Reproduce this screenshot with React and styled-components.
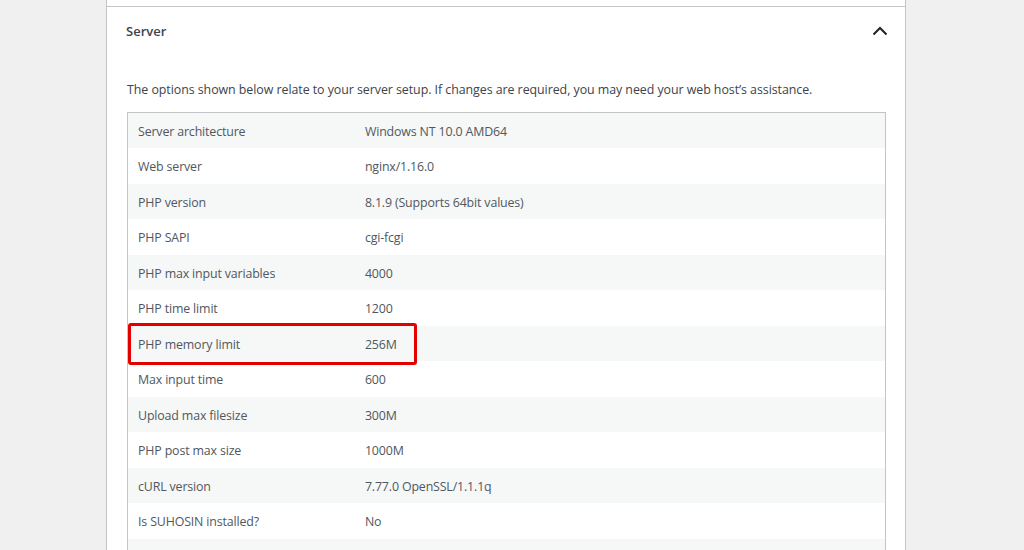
import React from "react";
import styled, { createGlobalStyle } from "styled-components";

const Global = createGlobalStyle`
  html, body { margin: 0; padding: 0; background: #f0f0f1; }
  body { font-family: "Open Sans", "Liberation Sans", sans-serif; height: 550px; overflow: hidden; }
`;

const Page = styled.div`
  padding-left: 106px;
`;

const Panel = styled.div`
  width: 798px;
  background: #fff;
  border-left: 1px solid #c3c4c7;
  border-right: 1px solid #c3c4c7;
  padding-top: 6px;
  min-height: 600px;
`;

const Section = styled.section`
  border-top: 1px solid #c3c4c7;
`;

const Trigger = styled.button`
  display: flex;
  align-items: center;
  justify-content: space-between;
  width: 100%;
  height: 48px;
  padding: 0 17px 0 19px;
  border: 0;
  background: transparent;
  font-family: inherit;
  font-size: 13px;
  font-weight: 600;
  color: #3c434a;
  cursor: pointer;
`;

const Content = styled.div`
  padding: 25px 19px 0 20px;
`;

const Desc = styled.p`
  margin: 0 0 12px;
  font-size: 12.4px;
  line-height: 20px;
  color: #3c434a;
  letter-spacing: -0.05px;
`;

const TableWrap = styled.div`
  position: relative;
`;

const Table = styled.table`
  width: 100%;
  border-collapse: collapse;
  border: 1px solid #c3c4c7;
  font-size: 12.4px;
  color: #50575e;
  letter-spacing: -0.15px;
`;

const Row = styled.tr`
  background: ${(p) => (p.$odd ? "#f6f7f7" : "#fff")};
`;

const Cell = styled.td`
  height: 35.5px;
  box-sizing: border-box;
  padding: 2px 10px 0;
  line-height: 19.5px;
  vertical-align: middle;
  width: ${(p) => (p.$label ? "30%" : "auto")};
`;

const Highlight = styled.div`
  position: absolute;
  left: 1px;
  top: 211px;
  width: 283px;
  height: 36px;
  border: 3.5px solid #e50000;
  border-radius: 3px;
  pointer-events: none;
`;

const rows = [
  ["Server architecture", "Windows NT 10.0 AMD64"],
  ["Web server", "nginx/1.16.0"],
  ["PHP version", "8.1.9 (Supports 64bit values)"],
  ["PHP SAPI", "cgi-fcgi"],
  ["PHP max input variables", "4000"],
  ["PHP time limit", "1200"],
  ["PHP memory limit", "256M"],
  ["Max input time", "600"],
  ["Upload max filesize", "300M"],
  ["PHP post max size", "1000M"],
  ["cURL version", "7.77.0 OpenSSL/1.1.1q"],
  ["Is SUHOSIN installed?", "No"],
  ["", ""],
];

const Chevron = () => (
  <svg width="16" height="10" viewBox="0 0 16 10" aria-hidden="true">
    <path d="M1.5 8.5 L8 2 L14.5 8.5" fill="none" stroke="#1d2327" strokeWidth="2" />
  </svg>
);

export default function App() {
  return (
    <>
      <Global />
      <Page>
        <Panel>
          <Section>
            <Trigger aria-expanded="true">
              <span>Server</span>
              <Chevron />
            </Trigger>
            <Content>
              <Desc>
                The options shown below relate to your server setup. If changes are required, you may need your web host’s assistance.
              </Desc>
              <TableWrap>
                <Table>
                  <tbody>
                    {rows.map(([k, v], i) => (
                      <Row key={i} $odd={i % 2 === 0}>
                        <Cell $label>{k}</Cell>
                        <Cell>{v}</Cell>
                      </Row>
                    ))}
                  </tbody>
                </Table>
                <Highlight />
              </TableWrap>
            </Content>
          </Section>
        </Panel>
      </Page>
    </>
  );
}
